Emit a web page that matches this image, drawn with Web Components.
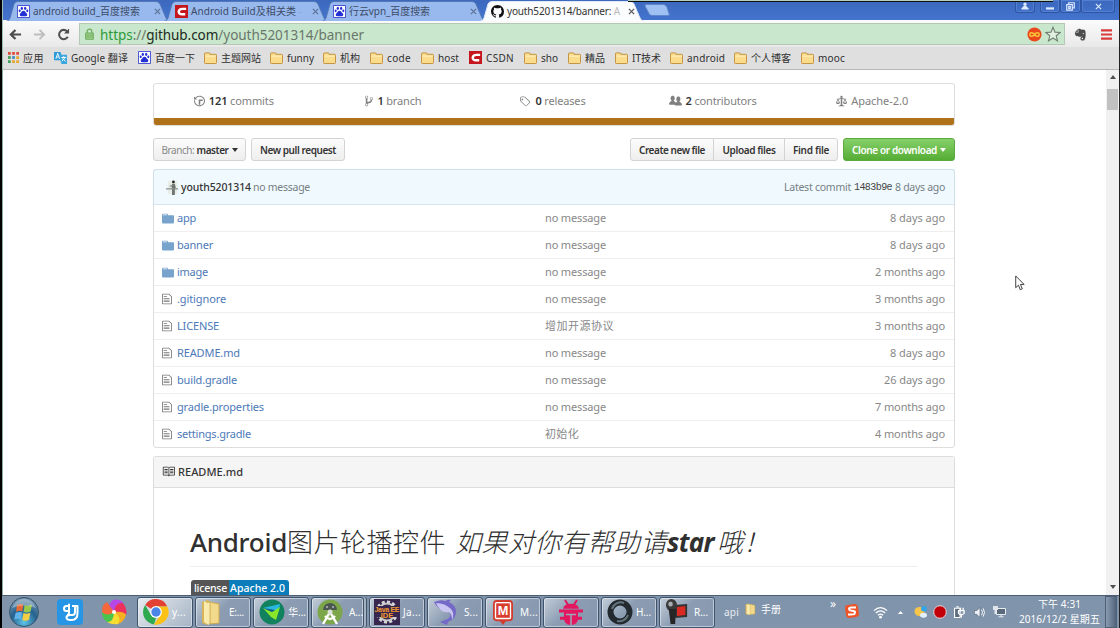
<!DOCTYPE html>
<html lang="zh-CN">
<head>
<meta charset="utf-8">
<title>youth5201314/banner</title>
<style>
html,body{margin:0;padding:0}
body{width:1120px;height:628px;overflow:hidden;background:#fff;font:11px/16px "Noto Sans","Noto Sans CJK SC",sans-serif;color:#333}
</style>
</head>
<body>
<app-desktop></app-desktop>
<script>
const ICONS = {
  history:['0 0 14 16','<path fill="currentColor" d="M8 13H6V6h5v2H8v5zM7 1C4.81 1 2.87 2.02 1.59 3.59L0 2v4h4L2.5 4.5C3.55 3.17 5.17 2.3 7 2.3c3.14 0 5.7 2.56 5.7 5.7s-2.56 5.7-5.7 5.7A5.71 5.71 0 0 1 1.3 8c0-.34.03-.67.09-1H.08C.03 7.33 0 7.66 0 8c0 3.86 3.14 7 7 7s7-3.14 7-7-3.14-7-7-7z"/>'],
  branch:['0 0 10 16','<path fill="currentColor" d="M10 5c0-1.11-.89-2-2-2a1.993 1.993 0 0 0-1 3.72v.3c-.02.52-.23.98-.63 1.38-.4.4-.86.61-1.38.63-.83.02-1.48.16-2 .45V4.72a1.993 1.993 0 0 0-1-3.72C.88 1 0 1.89 0 3a2 2 0 0 0 1 1.72v6.56c-.59.35-1 .99-1 1.72 0 1.11.89 2 2 2 1.11 0 2-.89 2-2 0-.53-.2-1-.53-1.36.09-.06.48-.41.59-.47.25-.11.56-.17.94-.17 1.05-.05 1.95-.45 2.75-1.25S8.95 7.77 9 6.73h-.02C9.59 6.37 10 5.73 10 5zM2 1.8c.66 0 1.2.55 1.2 1.2 0 .65-.55 1.2-1.2 1.2C1.35 4.2.8 3.65.8 3c0-.65.55-1.2 1.2-1.2zm0 12.41c-.66 0-1.2-.55-1.2-1.2 0-.65.55-1.2 1.2-1.2.65 0 1.2.55 1.2 1.2 0 .65-.55 1.2-1.2 1.2zm6-8c-.66 0-1.2-.55-1.2-1.2 0-.65.55-1.2 1.2-1.2.65 0 1.2.55 1.2 1.2 0 .65-.55 1.2-1.2 1.2z"/>'],
  tag:['0 0 14 16','<path fill="currentColor" d="M6.73 2.73C6.26 2.26 5.62 2 4.96 2H2.5A2.5 2.5 0 0 0 0 4.5v2.47c0 .66.27 1.3.73 1.77l6.06 6.06c.39.39 1.02.39 1.41 0l4.59-4.59a.996.996 0 0 0 0-1.41L6.73 2.73zM1.38 8.09C1.14 7.8 1 7.38 1 6.96V4.5C1 3.67 1.67 3 2.5 3h2.47c.42 0 .81.16 1.11.45l6.14 6.13-4.73 4.73-6.11-6.22zM4 5v2H2V5h2"/>'],
  people:['0 0 16 16','<path fill="currentColor" d="M16 12.999c0 .439-.45 1-1 1H7.995c-.539 0-.994-.447-.995-.999H1c-.54 0-1-.561-1-1 0-2.634 3-4 3-4s.229-.409 0-1c-.841-.621-1.058-.59-1-3 .058-2.419 1.367-3 2.5-3s2.442.58 2.5 3c.058 2.41-.159 2.379-1 3-.229.59 0 1 0 1s1.549.711 2.42 2.088C9.196 9.369 10 8.999 10 8.999s.229-.409 0-1c-.841-.62-1.058-.59-1-3 .058-2.419 1.367-3 2.5-3s2.437.581 2.495 3c.059 2.41-.158 2.38-1 3-.229.59 0 1 0 1s3.005 1.366 3.005 4"/>'],
  law:['0 0 14 16','<path fill="currentColor" d="M7 4c-.83 0-1.5-.67-1.5-1.5S6.17 1 7 1s1.5.67 1.5 1.5S7.83 4 7 4zm7 6c0 1.11-.89 2-2 2h-1c-1.11 0-2-.89-2-2l2-4h-1c-.55 0-1-.45-1-1H8v8c.42 0 1 .45 1 1h1c.42 0 1 .45 1 1H3c0-.55.58-1 1-1h1c0-.55.58-1 1-1h.03L6 5H5c0 .55-.45 1-1 1H3l2 4c0 1.11-.89 2-2 2H2c-1.11 0-2-.89-2-2l2-4H1V5h3c0-.55.45-1 1-1h4c.55 0 1 .45 1 1h3v1h-1l2 4zM2.5 7L1 10h3L2.5 7zM13 10l-1.5-3-1.5 3h3z"/>'],
  file:['0 0 12 16','<path fill="currentColor" d="M6 5H2V4h4v1zM2 8h7V7H2v1zm0 2h7V9H2v1zm0 2h7v-1H2v1zm10-7.5V14c0 .55-.45 1-1 1H1c-.55 0-1-.45-1-1V2c0-.55.45-1 1-1h7.500L12 4.500zM11 5L8 2H1v12h10V5z"/>'],
  dir:['0 0 14 16','<path fill="currentColor" d="M13 4H7V3c0-.66-.31-1-1-1H1c-.55 0-1 .45-1 1v10c0 .55.45 1 1 1h12c.55 0 1-.45 1-1V5c0-.55-.45-1-1-1zM6 4H1V3h5v1z"/>'],
  book:['0 0 16 16','<path fill="currentColor" d="M3 5h4v1H3V5zm0 3h4V7H3v1zm0 2h4V9H3v1zm11-5h-4v1h4V5zm0 2h-4v1h4V7zm0 2h-4v1h4V9zm2-6v9c0 .55-.45 1-1 1H9.5l-1 1-1-1H2c-.55 0-1-.45-1-1V3c0-.55.45-1 1-1h5.5l1 1 1-1H15c.55 0 1 .45 1 1zm-8 .5L7.5 3H2v9h6V3.5zm7-.5H9.5l-.5.5V12h6V3z"/>'],
  github:['0 0 16 16','<path fill="#111" d="M8 0C3.58 0 0 3.58 0 8c0 3.54 2.29 6.53 5.47 7.59.4.07.55-.17.55-.38 0-.19-.01-.82-.01-1.49-2.01.37-2.53-.49-2.69-.94-.09-.23-.48-.94-.82-1.13-.28-.15-.68-.52-.01-.53.63-.01 1.08.58 1.23.82.72 1.21 1.87.87 2.33.66.07-.52.28-.87.51-1.07-1.78-.2-3.64-.89-3.64-3.95 0-.87.31-1.59.82-2.15-.08-.2-.36-1.02.08-2.12 0 0 .67-.21 2.2.82.64-.18 1.32-.27 2-.27.68 0 1.36.09 2 .27 1.53-1.04 2.2-.82 2.2-.82.44 1.1.16 1.92.08 2.12.51.56.82 1.27.82 2.15 0 3.07-1.87 3.75-3.65 3.95.29.25.54.73.54 1.48 0 1.07-.01 1.93-.01 2.2 0 .21.15.46.55.38A8.013 8.013 0 0 0 16 8c0-4.42-3.58-8-8-8z"/>'],
  baidu:['0 0 14 14','<path fill="#fff" stroke="#3b45d0" d="M.5.5h13v13H.5z"/><g fill="#2230d4"><ellipse cx="5.2" cy="3.6" rx="1.2" ry="1.7"/><ellipse cx="8.8" cy="3.6" rx="1.2" ry="1.7"/><ellipse cx="2.9" cy="6.3" rx="1.1" ry="1.5"/><ellipse cx="11.1" cy="6.3" rx="1.1" ry="1.5"/><path d="M7 6.2c1.6 0 2 1.6 3.3 2.7 1.4 1.2.7 3.3-1 3.3-.9 0-1.4-.2-2.3-.2s-1.4.2-2.3.2c-1.7 0-2.4-2.100-1-3.300C5 7.800 5.400 6.200 7 6.200z"/></g>'],
  csdn:['0 0 14 14','<path fill="#c4161c" d="M0 0h14v14H0z"/><path fill="none" stroke="#fff" stroke-width="2.600" d="M12 4.200H8C3 4.200 2.500 10 7.500 10H11"/>'],
  folder:['0 0 14 13','<path fill="#fbdc8c" stroke="#bf8c38" d="M.5 11.500v-9.500q0-1 1-1h4q1 0 1 1v.500h6q1 0 1 1v8q0 1-1 1h-11q-1 0-1-1z"/><path stroke="#fff2c4" d="M1.500 4.500h11"/>'],
  translate:['0 0 14 14','<path fill="#2d9bd9" d="M0 1h7l3 9H0z"/><path fill="#3aa7de" d="M5 4h9v10H8z"/><path fill="none" stroke="#fff" d="M2 8.500l2-6 2 6M3 6.500h2M8 7h5M10.500 5.500V7M12 7l-3.500 4M9 8l3.500 3"/>'],
  apps:['0 0 12 12','<path fill="#dd4b39" d="M0 0h3v3H0zM4.500 0h3v3h-3zM9 0h3v3H9z"/><path fill="#42a05a" d="M0 4.500h3v3H0z"/><path fill="#4285c4" d="M4.500 4.500h3v3h-3z"/><path fill="#e7a62d" d="M9 4.500h3v3H9zM4.500 9h3v3h-3zM9 9h3v3H9z"/><path fill="#42a05a" d="M0 9h3v3H0z"/>'],
  close:['0 0 8 8','<path stroke="currentColor" stroke-width="1.400" d="M1 1l6 6M7 1L1 7"/>'],
  back:['0 0 14 12','<path fill="none" stroke="currentColor" stroke-width="2.400" d="M13 6H2.500M7 1L2 6l5 5"/>'],
  fwd:['0 0 14 12','<path fill="none" stroke="currentColor" stroke-width="2" d="M1 6h10.500M7 1l5 5-5 5"/>'],
  reload:['0 0 14 14','<path fill="none" stroke="#505050" stroke-width="2.200" d="M11.600 9.500A5 5 0 1 1 10.800 3.500"/><path fill="#505050" d="M13 .5v5.500H7.500z"/>'],
  lock:['0 0 11 14','<path fill="none" stroke="#6fae5e" stroke-width="1.500" d="M2.700 6V4a2.800 2.800 0 0 1 5.600 0v2"/><path fill="#9ed08c" stroke="#67a757" d="M.8 5.800h9.400v7.400H.8z"/><path stroke="#6fae5e" d="M1 8.300h9M1 10.600h9"/>'],
  inf:['0 0 16 16','<circle cx="8" cy="8" r="7.500" fill="#e8481c"/><path d="M8 8C6.500 5.500 3 5.300 3 8S6.500 10.500 8 8s5-2.700 5 0S9.500 10.500 8 8z" fill="none" stroke="#fbc03a" stroke-width="1.600"/>'],
  star:['0 0 16 16','<path fill="#e0efe0" stroke="#6f7d70" stroke-width="1.100" d="M8 1.200l2 4.900 5.200.3-4 3.400 1.300 5.100L8 12l-4.500 2.900 1.300-5.100-4-3.400L6 6.100z"/>'],
  evernote:['0 0 14 14','<path fill="#4c4c4c" d="M1 4.500L4.300 1.200C5.500.7 7 .8 7.600 1.600l3.400.4c1.400.3 1.700 3 1.500 6-.2 3-.8 5.500-3 5.500-2 0-2.700-.8-2.600-2.200.1-1.100 1-1.700 2.300-1.500v1c-.9 0-1.200.3-1 .9.300.6 1.600.4 1.700-.5.100-1-1-1.700-2.200-1.700-2 0-4.500-.1-5.300-.8C1.200 7.700.9 6 1 4.500z"/><path stroke="#ddd" d="M1.500 4.600h3V1.500" fill="none" stroke-width=".7"/><circle cx="10" cy="6" r=".7" fill="#eee"/>'],
  menu:['0 0 12 12','<path stroke="#d93a3a" stroke-width="2.200" d="M0 1.500h12M0 6h12M0 10.500h12"/>'],
  user:['0 0 9 9','<circle cx="4.500" cy="2.500" r="1.800" fill="#dce9ff"/><path fill="#dce9ff" d="M3.500 4h2l3 3.300V8.500H.5V7.300z"/>'],
  min:['0 0 9 9','<path fill="#dce9ff" d="M0 6h9v2.500H0z"/>'],
  max:['0 0 10 10','<path fill="none" stroke="#dce9ff" stroke-width="1.300" d="M3 2.500V.8h6.200v5.800H7.500M.8 3h6.200v6H.8zM3 5h1.800v2H3z"/>'],
  avatar:['0 0 14 16','<path fill="#e9ede8" d="M2 1h10v14H2z"/><circle cx="8" cy="2" r="1.500" fill="#222"/><path fill="#6d756e" d="M6.500 4h3l1 4-1 3v5H6.500V11L6 7z"/><path stroke="#8b938d" stroke-width="1.200" d="M0 9.500h13M4 7l4-2"/>'],
  windows:['0 0 30 30','<defs><radialGradient id="a" cx=".5" cy=".85" r=".8"><stop offset="0" stop-color="#60c5e7"/><stop offset=".55" stop-color="#24618f"/><stop offset="1" stop-color="#7193ad"/></radialGradient></defs><circle cx="15" cy="15" r="14.500" fill="url(#a)" stroke="#39566d"/><path fill="#e86a35" d="M8 8q3.500-2 6.300-.4l-1 6.700q-3-1.300-6.300.4z"/><path fill="#9ac94d" d="M15.600 8q3.200 1.500 7.400-.5l-1.400 7q-3.700 1.800-7 .2z"/><path fill="#62b2ea" d="M6.500 16q3.600-1.700 6.600-.4l-1 6.700q-3-1.300-6.800.4z"/><path fill="#f5ce46" d="M14.400 16.100q3.200 1.400 7-.3l-1.400 7q-3.400 1.600-6.700.2z"/><path fill="#fff" opacity=".3" d="M3 11Q7 2 15 2t12 9Q15 6 3 11z"/>'],
  qq:['0 0 26 26','<rect width="26" height="26" rx="4" fill="#2795e5"/><path fill="none" stroke="#fff" stroke-width="2" stroke-linejoin="round" d="M12 7H9.500Q7 7 7 9.500T9.500 12H12V5.500V14q0 2-2 2M15 7h5.500v7q0 7-6 7-5 0-5-2.500T13 16h2.500q2.500 0 2.500-3V8"/>'],
  wheel:['0 0 26 26','<path fill="#b648e8" d="M13 13Q4 7 12 1q7-2 10 3z"/><path fill="#ed315d" d="M13 13Q14 3 22 4q5 6 3 12z"/><path fill="#f8b023" d="M13 13q10-1 12 3-2 7-8 9z"/><path fill="#f8dd31" d="M13 13q8 5 4 12-6 1-11-2z"/><path fill="#49c54b" d="M13 13q0 10-7 10-5-4-5-10z"/><path fill="#f4683a" d="M13 13Q6 18 1 13 1 5 6 3z"/><circle cx="13" cy="13" r="2" fill="#fff"/>'],
  chrome:['0 0 26 26','<path fill="#e34133" d="M13 13L2.200 6A12.500 12.500 0 0 1 24.300 7.500H13z"/><path fill="#2da94f" d="M2.200 6L8 16l5 3-2 6.400A12.500 12.500 0 0 1 2.200 6z"/><path fill="#fbc116" d="M13 7.500h11.300A12.500 12.500 0 0 1 11 25.400L18 15z"/><circle cx="13" cy="13" r="5.900" fill="#fff"/><circle cx="13" cy="13" r="4.700" fill="#4a86e8"/>'],
  bigfolder:['0 0 20 26','<path fill="#d8b558" d="M1 3l6-2 3 3v20l-4 2-5-2z"/><path fill="#fff7c9" d="M7 4l5-1v20l-5 2z"/><path fill="#f2d98b" stroke="#ceaa4d" d="M9 3l9 2v19l-9 1z"/><path fill="#f9ebad" d="M3 2l5 3v21l-5-3z"/>'],
  navicat:['0 0 26 26','<circle cx="13" cy="13" r="12.500" fill="#12815d"/><path fill="#28b8df" d="M4 9l17-4-1 5-8 3z"/><path fill="#88e72b" d="M4 9l9 4 8-5-4 13-5-3z"/><path fill="#145d7c" d="M4 9l9 4 3-2z"/>'],
  studio:['0 0 26 26','<circle cx="13" cy="13" r="12.500" fill="#7da64b"/><path d="M6 11a7 7 0 0 1 14 0z" fill="#4b5750"/><circle cx="10" cy="8" r=".8" fill="#fff"/><circle cx="16" cy="8" r=".8" fill="#fff"/><path fill="none" stroke="#fff" stroke-width="2.400" d="M13 13L6 25M13 13l7 12M8 17q5 6 10 0"/><circle cx="13" cy="13" r="2.500" fill="#dce2da"/>'],
  java:['0 0 26 26','<path fill="#38264e" d="M0 0h26v26H0z"/><circle cx="13" cy="13" r="10" fill="none" stroke="#d5d7d8" stroke-width="3" stroke-dasharray="3 2.200"/><circle cx="13" cy="13" r="8.500" fill="none" stroke="#c8cccc" stroke-width="2"/><path fill="#38264e" d="M0 7h26v11H0z"/><text x="13" y="12.800" text-anchor="middle" font-family="Liberation Sans" font-weight="700" font-size="7" textLength="25" fill="#f39a2f">Java EE</text><text x="13" y="19" text-anchor="middle" font-family="Liberation Sans" font-weight="700" font-size="7.500" fill="#f39a2f">IDE</text>'],
  dolphin:['0 0 28 26','<path fill="#7469c6" d="M1 3Q8 0 12 2q4-2 6-1l-2 2q7 3 7 10 0 7-8 10l-1 3-7-3 5-2q7-2 5-8-5 0-8-3Q4 9 1 3z"/><path fill="#c9c4f2" d="M3 4q9 0 15 6 4 5 1 11 0-6-3-8-6 1-9-3Q4 7 3 4z"/>'],
  mdraw:['0 0 22 26','<rect x="1" y="1" width="20" height="20" rx="3" fill="#fff" stroke="#d23c2e" stroke-width="2"/><path fill="#d23c2e" d="M7 21h8l-4 5z"/><rect x="3.500" y="3.500" width="15" height="15" fill="#d83e30"/><text x="11" y="16" text-anchor="middle" font-family="Liberation Sans" font-weight="700" font-size="14" fill="#fff">M</text>'],
  bug:['0 0 24 28','<g fill="#e2175f"><path d="M4 10Q5 5 12 5t8 5z"/><path d="M5 13h14v7q0 7-7 7t-7-7z"/></g><path stroke="#e2175f" stroke-width="2" d="M6 1l3 5M18 1l-3 5"/><path stroke="#e2175f" stroke-width="3" d="M0 12.500h24M1 20h22"/><path stroke="#9aa9bb" stroke-width="1.500" d="M7 16h10M12 16v11"/>'],
  ring:['0 0 26 26','<circle cx="13" cy="13" r="9.500" fill="none" stroke="#222a30" stroke-width="6"/><path d="M5 10a9 9 0 0 1 12-6M21 16a9 9 0 0 1-11 6" fill="none" stroke="#65737d" stroke-width="2"/>'],
  camera:['0 0 26 26','<path fill="#333" d="M10 6l14-1v13l-13 1z"/><path fill="#d92923" d="M13 8l9-1v9l-9 1z"/><circle cx="7" cy="6" r="6" fill="#3a3a3a"/><circle cx="6" cy="5" r="2.500" fill="#a8adb1"/><path fill="#262626" d="M4 10h8l-1 15H6z"/>'],
  sogou:['0 0 14 14','<rect x=".5" y=".5" width="13" height="13" rx="3" fill="#ee5428" transform="rotate(-8 7 7)"/><path fill="none" stroke="#fff" stroke-width="2" d="M11 3.600H6Q3 4 4.500 6q1 .8 4 1 2.500.5 1 2.800Q9 10.500 3 10.500"/>'],
  wifi:['0 0 16 14','<path fill="none" stroke="#fff" stroke-width="1.400" d="M1 5q7-6.500 14 0M3 7.500q5-4.500 10 0M5.300 10q2.700-2.500 5.400 0"/><circle cx="8" cy="12" r="1.500" fill="#fff"/>'],
  up:['0 0 6 4','<path fill="#fff" d="M0 4l3-3 3 3z"/>'],
  down:['0 0 7 4','<path fill="currentColor" d="M0 0h7L3.500 4z"/>'],
  weather:['0 0 13 13','<circle cx="5.500" cy="6" r="5" fill="#f8c54b"/><circle cx="10" cy="3" r="3" fill="#35a4e7"/><ellipse cx="9.500" cy="10" rx="3.500" ry="2.700" fill="#e1f0fb"/>'],
  rec:['0 0 14 14','<circle cx="7" cy="7" r="6.300" fill="#c1000a" stroke="#e3d9da"/>'],
  plug:['0 0 12 13','<path fill="#5f6e7f" stroke="#fff" stroke-width="1.200" d="M.6 2.500h6v10h-6zM2.500.8h2v1.700"/><path stroke="#fff" stroke-width="1.500" fill="none" d="M5 5h6v3q-3 3-6 0zM7 5V2M10 5V2M8 9v3.500"/>'],
  sound:['0 0 12 12','<path fill="#eef2f6" stroke="#4e5d6e" stroke-width=".6" d="M.5 4h2.500l3.500-3.500v11L3 8H.5z"/><path fill="none" stroke="#fff" d="M8.300 3q2 3 0 6M10 1.500q3 4.500 0 9"/>'],
  net:['0 0 13 12','<path fill="#5b6a7b" stroke="#e8edf2" d="M3.500 2.500h9v6h-9zM5.500 10.800h5M8 8.500v2"/><path fill="#dfe5eb" d="M0 0h5v4H3v4H1.500V4H0z"/>'],
  cursor:['0 0 11 17','<path fill="#fff" stroke="#333" d="M.8 1v12.500l3-2.700 2 4.900 2.200-1-2-4.700h4z"/>']
};

/* Base class: clones a template made of the element's own styles and markup. */
class Base extends HTMLElement {
  constructor(){ super(); this.attachShadow({mode:'open'}); }
  connectedCallback(){
    if (this.shadowRoot.childNodes.length) return;
    const t = document.createElement('template');
    t.innerHTML = `<style>*{box-sizing:border-box}${this.css()}</style>${this.html()}`;
    this.shadowRoot.append(t.content.cloneNode(true));
  }
  css(){ return ':host{display:block}'; }
  html(){ return '<slot></slot>'; }
  a(n, d=''){ return this.getAttribute(n) ?? d; }
}
const ic = (n,w,h,s='') => `<ui-icon name="${n}" w="${w}" h="${h}" style="${s}"></ui-icon>`;
const tx = (s,w,st='') => `<fit-text w="${w}" style="${st}">${s}</fit-text>`;

class UiIcon extends Base {
  css(){ return `:host{display:block;flex:none;width:${this.a('w')}px;height:${this.a('h')}px}svg{display:block;width:100%;height:100%}`; }
  html(){ const [v,b]=ICONS[this.a('name')]; return `<svg viewBox="${v}" preserveAspectRatio="none">${b}</svg>`; }
}

/* Text run tracked to a set measure. */
class FitText extends Base {
  css(){ return `:host{display:block;flex:none;width:${this.a('w')}px;white-space:nowrap}span{display:inline-block}`; }
  html(){ return '<span><slot></slot></span>'; }
  connectedCallback(){
    super.connectedCallback();
    const s = this.shadowRoot.querySelector('span');
    const n = [...this.textContent].length, w = s.getBoundingClientRect().width;
    if (w && n) s.style.letterSpacing = ((+this.a('w') - w) / n).toFixed(3) + 'px';
  }
}

class BrowserTab extends Base {
  css(){ const on=this.hasAttribute('active'); return `:host{display:flex;position:relative;z-index:${on?2:1};flex:none;width:158px;height:21px;padding:1px 0 0 9px;align-items:center;color:${on?'#333':'#3d4c66'};font-size:10px}
  svg{position:absolute;left:-2px;top:1px;width:170px;height:20px}
  .t{position:relative;flex:1;margin-left:3px}ui-icon{position:relative}`; }
  html(){ const on=this.hasAttribute('active');
    return `<svg viewBox="0 0 170 20"><path d="M0 20.500Q3 20 4 17L8 3Q9 .5 12 .5H150Q153 .5 154 3L160 17Q161 20 165 20.500z" fill="${on?'#fbfcfd':'#98b9ee'}" stroke="${on?'#dfe8f5':'#5478b5'}"/></svg>${ic(this.a('icon'),13,13)}<div class="t"><slot></slot></div>${ic('close',7,7,'margin-right:5px;color:'+(on?'#555':'#5d7397'))}`; }
}

class TabStrip extends Base {
  css(){ return `:host{display:flex;height:20px;background:linear-gradient(#3c68bd,#4474cf);position:relative}
  .tabs{display:flex;padding-left:5px;flex:1;position:relative}.plus{margin:4px 0 0 4px}
  .line{position:absolute;left:625px;right:66px;top:0;height:2px;background:#111;border-top:1px solid #b5cfc0;z-index:3}
  .win{display:flex;margin-right:4px;height:13px}.b{display:flex;justify-content:center;align-items:center;border:1px solid #2f56a4;border-top:0;box-shadow:inset 0 0 0 1px #537fd2;border-radius:0 0 3px 3px}`; }
  html(){ return `<div class="tabs"><browser-tab icon="baidu">${tx('android build_百度搜索',107)}</browser-tab><browser-tab icon="csdn">${tx('Android Build及相关类 <span style="color:#8ba4cd">-</span>',111)}</browser-tab><browser-tab icon="baidu">${tx('行云vpn_百度搜索',81)}</browser-tab><browser-tab icon="github" active>${tx('youth5201314/banner: <span style="color:#bbb">A</span>',113)}</browser-tab>
  <svg class="plus" width="27" height="13"><path d="M2 .5h17q3 0 4 3l2 6q1 2-1 2H8q-2 0-3-2L1 2Q1 .5 2 .5z" fill="#9fc0f2" stroke="#5f87cc"/></svg></div><div class="line"></div>
  <div class="win"><div class="b" style="width:20px;margin-right:5px">${ic('user',8,8)}</div><div class="b" style="width:20px">${ic('min',8,8)}</div><div class="b" style="width:21px">${ic('max',9,9)}</div><div class="b" style="width:34px;color:#dce9ff">${ic('close',7,7)}</div></div>`; }
}

class UrlBar extends Base {
  css(){ return `:host{display:flex;height:27px;background:linear-gradient(#fbfbfb,#e9e9e9);align-items:center;padding:1px 7px 0 6px}
  .box{display:flex;align-items:center;width:986px;height:22px;margin-left:9px;background:#c9e7cc;border:1px solid #b4c8b5;padding:0 3px 0 5px;font-size:13.5px;line-height:20px;color:#6b776c}
  .s{color:#2c9a3b}.h{color:#202a21}`; }
  html(){ return `${ic('back',13,11,'color:#4c4c4c')}${ic('fwd',13,11,'margin-left:11px;color:#bebebe')}${ic('reload',13,13,'margin-left:11px')}
  <div class="box">${ic('lock',9,12)}${tx('<span class="s">https</span>://<span class="h">github.com</span>/youth5201314/banner',264,'margin:1px 0 0 6px')}<div style="flex:1"></div>${ic('inf',15,15)}${ic('star',16,16,'margin-left:3px')}</div>${ic('evernote',13,13,'margin-left:9px')}${ic('menu',11,11,'margin-left:14px')}`; }
}

class BookmarkItem extends Base {
  css(){ return `:host{display:flex;align-items:center;gap:4px;flex:none}`; }
  html(){ const n=this.a('icon','folder'); return `${ic(n,n=='apps'?11:13,n=='folder'?12:n=='apps'?11:13)}<slot></slot>`; }
}
class BookmarkBar extends Base {
  css(){ return `:host{display:flex;height:23px;background:#dfdfdf;border-bottom:1px solid #b8b8b8;padding:0 0 1px 5px;align-items:center;font-size:10px;color:#303030}`; }
  html(){ const d=[['应用',21,'apps',10],['Google 翻译',57,'translate',10],['百度一下',40,'baidu',9],['主题网站',40,,9],['funny',27,,9],['机构',20,,10],['code',24,,10],['host',21,,10],['CSDN',28,'csdn',10],['sho',17,,10],['精品',20,,10],['IT技术',29,,9],['android',38,,9],['个人博客',40,,10],['mooc',27,,0]];
    return d.map(([t,w,i='folder',g])=>`<bookmark-item icon="${i}" style="margin-right:${g}px">${tx(t,w)}</bookmark-item>`).join(''); }
}

class RepoStats extends Base {
  css(){ return `:host{display:flex;flex-direction:column;height:43px;border:1px solid #ddd;border-radius:3px;overflow:hidden;color:#808080}
  .r{display:flex;flex:1;align-items:center;padding:0 2px 1px 0}.c{flex:1;display:flex;justify-content:center;align-items:center;gap:4px}b{color:#333;font-weight:600}.bar{height:8px;background:#b07219;margin:0 -1px -1px}`; }
  html(){ const d=[['history',11,'<b>121</b> commits',65],['branch',8,'<b>1</b> branch',44],['tag',11,'<b>0</b> releases',50],['people',13,'<b>2</b> contributors',71],['law',11,'Apache-2.0',57]];
    return `<div class="r">${d.map(([i,w,t,n])=>`<div class="c">${ic(i,w,12)}${tx(t,n)}</div>`).join('')}</div><div class="bar"></div>`; }
}

class GhButton extends Base {
  css(){ const g=this.hasAttribute('primary'), p=this.a('pos'); return `:host{display:flex;align-items:center;justify-content:center;box-sizing:border-box;gap:3px;width:${this.a('w')}px;height:23px;border:1px solid ${g?'#5ca941':'#d3d3d3'};border-radius:${p=='l'?'3px 0 0 3px':p=='m'?'0':p=='r'?'0 3px 3px 0':'3px'};${p=='m'||p=='r'?'margin-left:-1px;':''}background:${g?'linear-gradient(#86d06b,#55ad34)':'linear-gradient(#fcfcfc,#eee)'};color:${g?'#fff':'#333'};font-weight:600;font-size:10px}`; }
  html(){ return `<slot></slot>${this.hasAttribute('caret')?ic('down',6,4):''}`; }
}
class RepoActions extends Base {
  css(){ return `:host{display:flex;margin-top:12px;height:23px}.l{color:#888;font-weight:400}`; }
  html(){ return `<gh-button w="93" caret>${tx('<span class="l">Branch:</span> master',67)}</gh-button><gh-button w="94" style="margin-left:5px">${tx('New pull request',76)}</gh-button><div style="flex:1"></div>
  <gh-button w="84" pos="l">${tx('Create new file',66)}</gh-button><gh-button w="72" pos="m">${tx('Upload files',53)}</gh-button><gh-button w="54" pos="r">${tx('Find file',36)}</gh-button><gh-button w="112" primary caret style="margin-left:5px">${tx('Clone or download',85)}</gh-button>`; }
}

class FileRow extends Base {
  css(){ const d=this.a('kind')=='dir'; return `:host{display:grid;grid-template-columns:15px 368px 1fr auto;align-items:center;height:27px;box-sizing:border-box;padding:0 9px 0 8px;border-top:1px solid #eee;color:#888}
  :host(:first-of-type){border-top-color:#d5e6ee}.n{color:#4d79b8}ui-icon{color:${d?'#78a3cc':'#777'}}`; }
  html(){ const d=this.a('kind')=='dir'; return `${ic(d?'dir':'file',d?12:10,d?13:12)}<div class="n">${tx(this.a('name'),this.a('nw'))}</div><div>${tx(this.a('msg'),this.a('mw'))}</div><div>${tx(this.a('age'),this.a('aw'))}</div>`; }
}
class FileList extends Base {
  css(){ return `:host{display:block;box-sizing:border-box;margin-top:8px;border:1px solid #ddd;border-radius:3px;height:279px}
  .top{display:flex;align-items:center;height:35px;margin:-1px -1px 0;padding:0 9px 0 12px;background:#f0f9fd;border:1px solid #cfe2ec;border-bottom:0;border-radius:3px 3px 0 0;color:#767f86;font-size:10.5px}
  b{font-weight:500;color:#333}.sha{font:10px/16px "Liberation Mono",monospace;color:#444}`; }
  html(){ const m='no message'; const d=[['dir','app',19,m,61,'8 days ago',55],['dir','banner',36,m,61,'8 days ago',55],['dir','image',31,m,61,'2 months ago',70],['file','.gitignore',49,m,61,'3 months ago',70],['file','LICENSE',42,'增加开源协议',69,'3 months ago',70],['file','README.md',63,m,61,'8 days ago',55],['file','build.gradle',60,m,61,'26 days ago',61],['file','gradle.properties',87,m,61,'7 months ago',70],['file','settings.gradle',74,'初始化',34,'4 months ago',70]];
    return `<div class="top">${ic('avatar',13,15)}${tx('<b>youth5201314</b>',70,'margin-left:2px')}${tx(m,57,'margin-left:2px')}<div style="flex:1"></div>${tx('Latest commit',67)}${tx('<span class="sha">1483b9e</span>',38,'margin-left:3px')}${tx('8 days ago',50,'margin-left:3px')}</div>`+
    d.map(r=>`<file-row kind="${r[0]}" name="${r[1]}" nw="${r[2]}" msg="${r[3]}" mw="${r[4]}" age="${r[5]}" aw="${r[6]}"></file-row>`).join(''); }
}

class ReadmeBox extends Base {
  css(){ return `:host{display:block;margin-top:8px;border:1px solid #ddd;border-bottom:0;border-radius:3px 3px 0 0;height:150px}
  .h{display:flex;align-items:center;height:31px;background:#f5f5f5;border-bottom:1px solid #ddd;padding:0 0 1px 8px;gap:3px;font-weight:500;color:#333}
  .title{display:flex;align-items:center;margin:37px 37px 0 36px;height:42px;padding-bottom:8px;border-bottom:1px solid #eee;font-size:26px;line-height:34px;color:#303030;font-weight:300}
  .badge{display:flex;margin:13px 0 0 37px;width:98px;height:17px;border-radius:3px 3px 0 0;overflow:hidden;background:linear-gradient(90deg,#555 38px,#0b7dbb 38px);color:#fff;align-items:center;padding:0 0 2px 3px;font-size:10.5px;font-weight:500}`; }
  html(){ return `<div class="h">${ic('book',13,13)}${tx('README.md',65)}</div><div class="title">${tx('Android',97,'font-weight:500')}${tx('图片轮播控件',159)}${tx('如果对你有帮助请',212,'margin-left:9px;font-style:italic')}${tx('star',47,'font-weight:700;font-style:italic')}${tx('哦！',52,'margin-left:3px;font-style:italic')}</div>
  <div class="badge">${tx('license',33)}${tx('Apache 2.0',55,'margin-left:3px')}</div>`; }
}

class PageScroll extends Base {
  css(){ return `:host{display:flex;flex-direction:column;align-items:center;width:13px;background:#f1f1f1;color:#505050;padding:5px 0 6px;box-sizing:border-box}.t{width:11px;height:21px;background:#c1c1c1;margin-top:10px}`; }
  html(){ return `${ic('down',6,4,'transform:scaleY(-1)')}<div class="t"></div><div style="flex:1"></div>${ic('down',6,4)}`; }
}

class TaskButton extends Base {
  css(){ const on=this.hasAttribute('active'); return `:host{display:flex;align-items:center;box-sizing:border-box;flex:none;width:56px;height:31px;margin-right:2px;padding-left:5px;border:1px solid #41536a;border-radius:3px;background:${on?'linear-gradient(135deg,#e6ebf0,#a5b3c4)':'linear-gradient(135deg,#c3cdd8 0,#8c9db3 45%,#8496ae)'};box-shadow:inset 0 0 0 1px rgba(235,242,250,.55);color:#fff;font-size:10px}`; }
  html(){ const w=+this.a('iw','26'), h=+this.a('ih','26'); return `${ic(this.a('icon'),w,h,'margin-left:'+this.a('ml','0')+'px;margin-right:'+this.a('mr','3')+'px')}<slot></slot>`; }
}
class TaskBar extends Base {
  css(){ return `:host{display:flex;height:33px;box-sizing:border-box;background:linear-gradient(#7f93aa,#8195ac);border-top:1px solid #4d5e73;align-items:center;color:#fff;font-size:10px;position:relative}
  .pins{display:flex;align-items:center;flex:none;width:135px;padding-left:7px}.btns{display:flex;align-items:center;flex:none;width:585px}
  .tray{display:flex;align-items:center;flex:1}.clock{display:flex;flex-direction:column;align-items:center;margin-left:13px;width:81px;line-height:15px}.peek{flex:none;width:12px;height:32px;margin-left:5px;border:1px solid #4d6076;background:linear-gradient(90deg,#8a9bb0,#51657d)}`; }
  html(){ return `<div class="pins">${ic('windows',30,30)}${ic('qq',26,26,'margin-left:18px')}${ic('wheel',26,26,'margin-left:18px')}</div>
  <div class="btns"><task-button icon="chrome" active>${tx('y...',14)}</task-button><task-button icon="bigfolder" iw="20" mr="8">${tx('E:...',15)}</task-button><task-button icon="navicat">${tx('华...',18)}</task-button><task-button icon="studio" mr="6" style="width:53px;margin-right:5px;box-shadow:inset 0 0 0 1px rgba(235,242,250,.55),2px 0 0 #a3b2c3,3px 0 0 #41536a">${tx('A...',14)}</task-button><task-button icon="java" ml="-1">${tx('Ja...',18)}</task-button><task-button icon="dolphin" iw="28">${tx('S...',14)}</task-button><task-button icon="mdraw" iw="20" ih="25" ml="2" mr="7">${tx('M...',18)}</task-button><task-button icon="bug" ml="10" iw="24" ih="27"></task-button><task-button icon="ring">${tx('H...',15)}</task-button><task-button icon="camera" iw="24" mr="5">${tx('R...',14)}</task-button></div>
  <div class="tray">${tx('api',15,'margin-left:2px;color:#e8edf3')}${ic('bigfolder',11,12,'margin:-7px 0 0 6px')}${tx('手册',20,'margin:-7px 0 0 5px')}${tx('»',7,'margin:-17px 0 0 49px;font-size:12px')}${ic('sogou',14,14,'margin:-3px 0 0 8px')}${ic('wifi',15,13,'margin-left:14px')}${ic('up',5,4,'margin-left:10px')}${ic('weather',13,12,'margin-left:11px')}${ic('rec',14,14,'margin-left:6px')}${ic('plug',11,12,'margin-left:7px')}${ic('sound',11,11,'margin-left:9px')}${ic('net',13,12,'margin-left:8px')}
  <div class="clock">${tx('下午 4:31',43)}${tx('2016/12/2 星期五',81)}</div><div class="peek"></div></div>`; }
}

class AppDesktop extends Base {
  css(){ return `:host{display:flex;flex-direction:column;box-sizing:border-box;width:1120px;height:628px;border-left:2px solid #000;border-right:1px solid #222;background:#fff;position:relative;overflow:hidden}
  .view{display:flex;height:525px;border-left:1px solid #89aaa5}.page{flex:1;overflow:hidden}.col{width:802px;margin:13px 0 0 150px}
  .cur{position:absolute;left:1013px;top:275px}.chrome{border-left:1px solid #9bbfb6}`; }
  html(){ return `<div class="chrome"><tab-strip></tab-strip><url-bar></url-bar><bookmark-bar></bookmark-bar></div><div class="view"><div class="page"><div class="col"><repo-stats></repo-stats><repo-actions></repo-actions><file-list></file-list><readme-box></readme-box></div></div><page-scroll></page-scroll></div><task-bar></task-bar><div class="cur">${ic('cursor',10,16)}</div>`; }
}

for (const [n,c] of Object.entries({'app-desktop':AppDesktop,'tab-strip':TabStrip,'browser-tab':BrowserTab,'url-bar':UrlBar,'bookmark-bar':BookmarkBar,'bookmark-item':BookmarkItem,'repo-stats':RepoStats,'repo-actions':RepoActions,'gh-button':GhButton,'file-list':FileList,'file-row':FileRow,'readme-box':ReadmeBox,'page-scroll':PageScroll,'task-bar':TaskBar,'task-button':TaskButton,'ui-icon':UiIcon,'fit-text':FitText})) customElements.define(n,c);
</script>
</body>
</html>
